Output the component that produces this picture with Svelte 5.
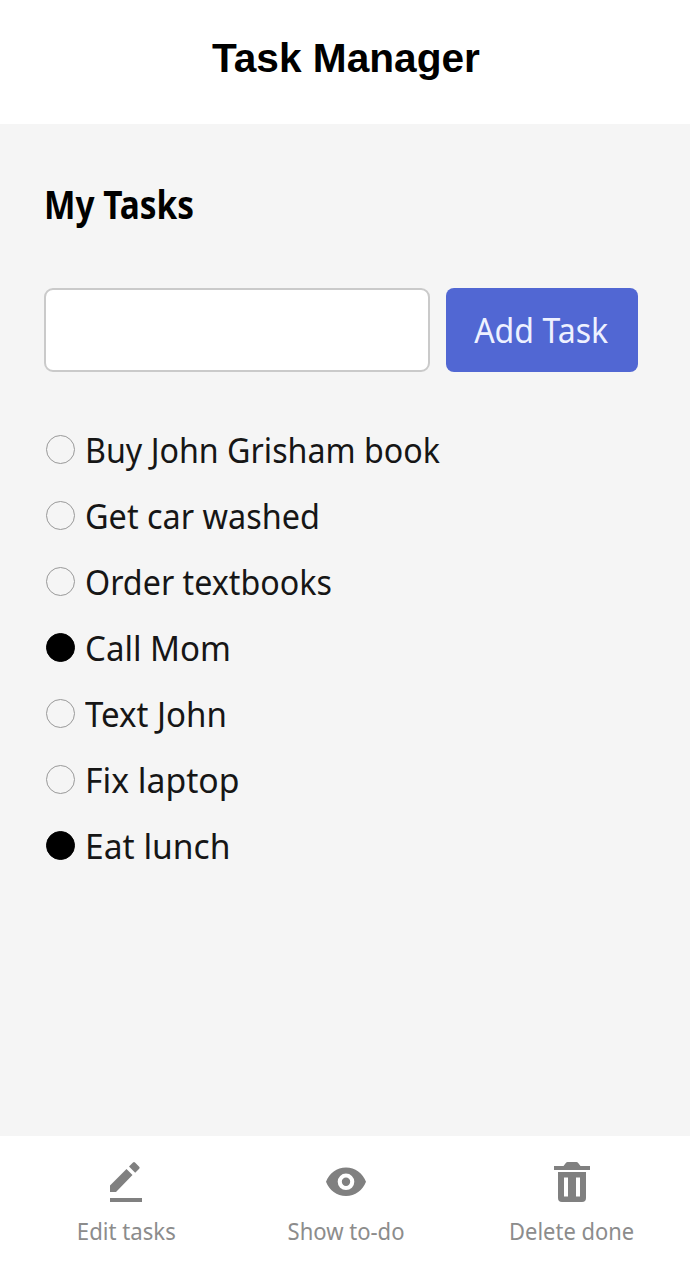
<script>
  const tasks = [
    { name: 'Buy John Grisham book', done: false, width: 355 },
    { name: 'Get car washed', done: false, width: 235 },
    { name: 'Order textbooks', done: false, width: 247 },
    { name: 'Call Mom', done: true, width: 146 },
    { name: 'Text John', done: false, width: 142 },
    { name: 'Fix laptop', done: false, width: 154.5 },
    { name: 'Eat lunch', done: true, width: 145.5 }
  ];

  // Condenses or widens a line of text to the given width.
  function fit(node, width) {
    node.style.transform = `scaleX(${width / node.getBoundingClientRect().width})`;
  }
</script>

<div class="app">
  <header><h1 use:fit={268}>Task Manager</h1></header>

  <main>
    <h2 use:fit={150}>My Tasks</h2>
    <form onsubmit={(e) => e.preventDefault()}>
      <input type="text" aria-label="Task" />
      <button class="add"><span use:fit={134}>Add Task</span></button>
    </form>
    <ul>
      {#each tasks as task}
        <li>
          <i class:done={task.done}></i>
          <span use:fit={task.width}>{task.name}</span>
        </li>
      {/each}
    </ul>
  </main>

  <footer>
    <button class="tool">
      <svg width="40" height="44" viewBox="0 0 40 44">
        <path d="M4 24.500 20.500 8 26.500 14 10 31H4ZM23 5.500 27 1.500Q28 .500 29 1.500L33.200 5.700Q34.200 6.700 33.200 7.700L29.200 11.700ZM4 37H36V41H4Z" />
      </svg>
      <span use:fit={99}>Edit tasks</span>
    </button>
    <button class="tool">
      <svg width="40" height="44" viewBox="0 0 40 44">
        <path fill-rule="evenodd" d="M20 6.500C10.800 6.500 3.200 12.200 0 20.700 3.200 29.200 10.800 35 20 35S36.800 29.200 40 20.700C36.800 12.200 29.200 6.500 20 6.500ZM20 12.500A8.300 8.300 0 1 1 20 29.100 8.300 8.300 0 1 1 20 12.500ZM20 16.600A4.200 4.200 0 1 0 20 25 4.200 4.200 0 1 0 20 16.600Z" />
      </svg>
      <span use:fit={117}>Show to-do</span>
    </button>
    <button class="tool">
      <svg width="40" height="44" viewBox="0 0 40 44">
        <path fill-rule="evenodd" d="M2 5H11.500L14 1.700Q14.600 1 15.500 1H24.500Q25.400 1 26 1.700L28.500 5H38V9H2ZM6 11H34V37Q34 41 30 41H10Q6 41 6 37ZM12 16.500V35.500H16V16.500ZM24 16.500V35.500H28V16.500Z" />
      </svg>
      <span use:fit={125}>Delete done</span>
    </button>
  </footer>
</div>

<style>
  :global(body) { background: #fff; }
  .app {
    width: 690px;
    height: 1262px;
    display: flex;
    flex-direction: column;
    overflow: hidden;
    background: #fff;
    color: #000;
    font-family: 'Noto Sans', sans-serif;
  }
  h1, h2, ul { margin: 0; padding: 0; }
  header {
    height: 124px;
    flex: none;
    box-sizing: border-box;
    padding: 35px 0 0 2px;
    display: flex;
    justify-content: center;
    align-items: flex-start;
  }
  h1 {
    font: bold 40px/46px 'Liberation Sans', sans-serif;
    white-space: nowrap;
  }
  main {
    flex: 1;
    box-sizing: border-box;
    padding: 56px 52px 0 44px;
    background: #f5f5f5;
  }
  h2 {
    width: max-content;
    font-size: 39px;
    line-height: 48px;
    font-weight: 700;
    transform-origin: left;
  }
  form {
    display: grid;
    grid-template-columns: 386px 192px;
    gap: 16px;
    height: 84px;
    margin-top: 60px;
  }
  input {
    box-sizing: border-box;
    min-width: 0;
    border: 2px solid #cacaca;
    border-radius: 9px;
    background: #fff;
    outline: none;
    font: 35px 'Noto Sans', sans-serif;
    padding: 0 16px;
  }
  button {
    border: 0;
    padding: 0;
    font-family: inherit;
  }
  .add {
    border-radius: 8px;
    background: #5167d3;
    color: #eef1ff;
    font-size: 35px;
    line-height: 48px;
    display: flex;
    align-items: center;
    justify-content: center;
    padding-right: 2px;
  }
  span { white-space: nowrap; }
  ul { list-style: none; margin-top: 44px; }
  li {
    height: 66px;
    display: flex;
    align-items: center;
    padding-left: 1.5px;
    font-size: 35px;
    line-height: 48px;
    color: #161616;
  }
  li span { transform-origin: left; padding-top: 1px; }
  i {
    box-sizing: border-box;
    flex: none;
    width: 29px;
    height: 29px;
    margin-right: 10.500px;
    border: 1.5px solid #999;
    border-radius: 50%;
  }
  i.done { background: #000; border-color: #000; }
  footer {
    height: 126px;
    flex: none;
    box-sizing: border-box;
    padding-top: 25px;
    display: grid;
    grid-template-columns: 252px 188px 250px;
  }
  .tool {
    display: flex;
    flex-direction: column;
    align-items: center;
    background: none;
    color: #8c8c8c;
    font-size: 23px;
    line-height: 32px;
  }
  .tool:last-child { padding-left: 13px; }
  .tool span { margin-top: 10px; }
  svg { fill: #808080; }
</style>
